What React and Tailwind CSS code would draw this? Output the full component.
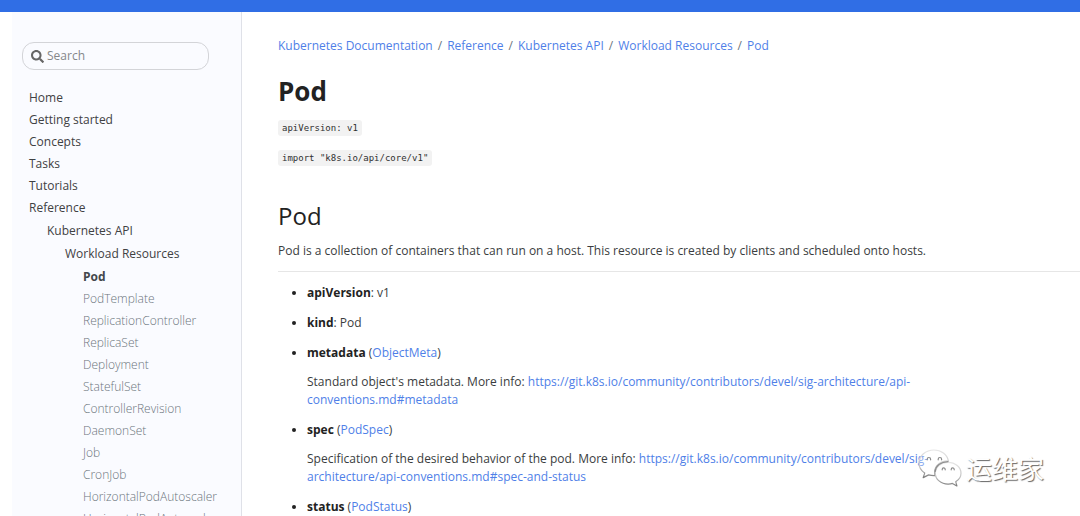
import React from "react";

const tree = [
  { label: "Home" },
  { label: "Getting started" },
  { label: "Concepts" },
  { label: "Tasks" },
  { label: "Tutorials" },
  {
    label: "Reference",
    children: [
      {
        label: "Kubernetes API",
        children: [
          {
            label: "Workload Resources",
            children: [
              { label: "Pod", active: true },
              { label: "PodTemplate", leaf: true },
              { label: "ReplicationController", leaf: true },
              { label: "ReplicaSet", leaf: true },
              { label: "Deployment", leaf: true },
              { label: "StatefulSet", leaf: true },
              { label: "ControllerRevision", leaf: true },
              { label: "DaemonSet", leaf: true },
              { label: "Job", leaf: true },
              { label: "CronJob", leaf: true },
              { label: "HorizontalPodAutoscaler", leaf: true },
              { label: "HorizontalPodAutoscaler", leaf: true },
            ],
          },
        ],
      },
    ],
  },
];

const crumbs = ["Kubernetes Documentation", "Reference", "Kubernetes API", "Workload Resources", "Pod"];

function itemClass(item) {
  if (item.active) return "font-bold text-[#43474b]";
  if (item.leaf) return "font-light text-[#6c757d]";
  return "text-[#3f4143]";
}

function NavList({ items, nested }) {
  return (
    <ul className={nested ? "mt-px pl-[18px]" : ""}>
      {items.map((item, i) => (
        <li key={i}>
          <a href="#" className={"block leading-[22px] whitespace-nowrap " + itemClass(item)}>
            {item.label}
          </a>
          {item.children && <NavList items={item.children} nested />}
        </li>
      ))}
    </ul>
  );
}

function Link({ children }) {
  return (
    <a href="#" className="text-[#4f7fe8]">
      {children}
    </a>
  );
}

function Code({ children }) {
  return (
    <p className="flex">
      <code className="rounded-[3px] bg-[#f2f2f2] px-1 font-['DejaVu_Sans_Mono',monospace] text-[9px] leading-4 text-[#303030]">
        {children}
      </code>
    </p>
  );
}

function Watermark() {
  return (
    <div className="absolute right-9 bottom-7 flex items-center gap-1">
      <svg width="44" height="38" viewBox="0 0 44 38" fill="none" aria-hidden="true">
        <defs>
          <linearGradient id="bubble-edge" x1="0" y1="0" x2="0" y2="1">
            <stop offset="0" stopColor="#e6e6e6" />
            <stop offset="0.6" stopColor="#c4c4c4" />
            <stop offset="1" stopColor="#7d7d7d" />
          </linearGradient>
        </defs>
        <g fill="#fff" fillOpacity="0.35" stroke="url(#bubble-edge)" strokeWidth="1.2" strokeLinejoin="round">
          <path d="M16 1C7.700 1 1 6.800 1 14c0 4.200 2.200 7.700 5.700 10.100L5.200 28.600l5.400-2.700c1.700.5 3.500.8 5.400.8h1.200c-.4-1.200-.6-2.300-.6-3.500 0-6.700 6.200-11.300 13.800-11.300C29.200 5.400 23.200 1 16 1z" />
          <path d="M43 24.200c0-6-5.800-10.900-12.900-10.900S17.300 18.200 17.300 24.200s5.700 10.900 12.800 10.900c1.500 0 3-.2 4.400-.7l4.400 2.500-1.200-4.200c3.200-2 5.300-5 5.300-8.500z" />
        </g>
        <path
          d="M17.200 22.500C17.600 16.800 22.600 12.900 30 12.600"
          stroke="#8c8c8c"
          strokeWidth="1.2"
          strokeLinecap="round"
        />
        <g stroke="#8a8a8a" strokeWidth="1.2" strokeLinecap="round">
          <path d="M9.200 10.800v-.6a1.700 1.700 0 0 1 3.400 0v.6M20.200 10.800v-.6a1.700 1.700 0 0 1 3.400 0v.6" />
          <path d="M24.200 20.800v-.4a1.500 1.500 0 0 1 3 0v.4M33.200 20.800v-.4a1.500 1.500 0 0 1 3 0v.4" />
        </g>
      </svg>
      <span className="font-['Noto_Sans_CJK_SC',sans-serif] text-[26px] leading-10 text-white [text-shadow:1px_1px_1px_rgba(0,0,0,0.6)]">
        运维家
      </span>
    </div>
  );
}

export default function App() {
  return (
    <div className="relative flex h-screen flex-col overflow-hidden bg-white font-['Open_Sans',sans-serif] text-xs text-[#3a3d40]">
      <header className="h-3 shrink-0 bg-[#306ee5]" />
      <div className="flex min-h-0 flex-1 pl-3">
        <aside className="w-[230px] shrink-0 overflow-hidden border-r border-[#dfe1e8] bg-[#fafbff] pt-[30px]">
          <div className="mr-8 ml-[10px] flex h-7 items-center gap-[3px] rounded-xl border border-[#d3d4d8] px-2">
            <svg width="13" height="13" viewBox="0 0 512 512" fill="#666" aria-hidden="true">
              <path d="M505 442.700L405.300 343c-4.500-4.500-10.600-7-17-7H372c27.600-35.300 44-79.700 44-128C416 93.100 322.900 0 208 0S0 93.100 0 208s93.100 208 208 208c48.300 0 92.700-16.400 128-44v16.300c0 6.400 2.500 12.500 7 17l99.700 99.700c9.400 9.400 24.600 9.400 33.900 0l28.300-28.300c9.400-9.400 9.400-24.600.1-34zM208 336c-70.700 0-128-57.200-128-128 0-70.700 57.200-128 128-128 70.700 0 128 57.200 128 128 0 70.700-57.200 128-128 128z" />
            </svg>
            <input
              type="search"
              aria-label="Search"
              placeholder="Search"
              className="min-w-0 flex-1 bg-transparent outline-none placeholder:text-[#85878a]"
            />
          </div>
          <nav aria-label="Documentation" className="mt-[17px] pl-[17px]">
            <NavList items={tree} />
          </nav>
        </aside>

        <main className="min-w-0 flex-1 pt-[25px] pl-9 leading-[18px]">
          <nav aria-label="Breadcrumb">
            <ol className="flex">
              {crumbs.map((c, i) => (
                <li key={c}>
                  {i > 0 && <span className="px-[5px] text-[#6c757d]">/</span>}
                  <Link>{c}</Link>
                </li>
              ))}
            </ol>
          </nav>
          <h1 className="mt-5 text-[26px] leading-8 font-bold text-[#222]">Pod</h1>
          <div className="mt-[13px] flex flex-col gap-[14px]">
            <Code>apiVersion: v1</Code>
            <Code>import "k8s.io/api/core/v1"</Code>
          </div>
          <h2 className="mt-9 text-2xl leading-7 text-[#222]">Pod</h2>
          <p className="mt-3 max-w-[82%]">
            Pod is a collection of containers that can run on a host. This resource is created by clients and scheduled
            onto hosts.
          </p>
          <hr className="mt-[11px] mb-3 border-[#e6e6e6]" />
          <ul className="flex max-w-[82%] list-disc flex-col gap-3 pl-[29px] marker:text-[#222] [&_strong]:text-[#222]">
            <li>
              <strong>apiVersion</strong>: v1
            </li>
            <li>
              <strong>kind</strong>: Pod
            </li>
            <li>
              <p>
                <strong>metadata</strong> (<Link>ObjectMeta</Link>)
              </p>
              <p className="mt-[11px]">
                Standard object's metadata. More info:{" "}
                <Link>https://git.k8s.io/community/contributors/devel/sig-architecture/api-conventions.md#metadata</Link>
              </p>
            </li>
            <li>
              <p>
                <strong>spec</strong> (<Link>PodSpec</Link>)
              </p>
              <p className="mt-[11px]">
                Specification of the desired behavior of the pod. More info:{" "}
                <Link>
                  https://git.k8s.io/community/contributors/devel/sig-architecture/api-conventions.md#spec-and-status
                </Link>
              </p>
            </li>
            <li>
              <strong>status</strong> (<Link>PodStatus</Link>)
            </li>
          </ul>
        </main>
      </div>
      <Watermark />
    </div>
  );
}
